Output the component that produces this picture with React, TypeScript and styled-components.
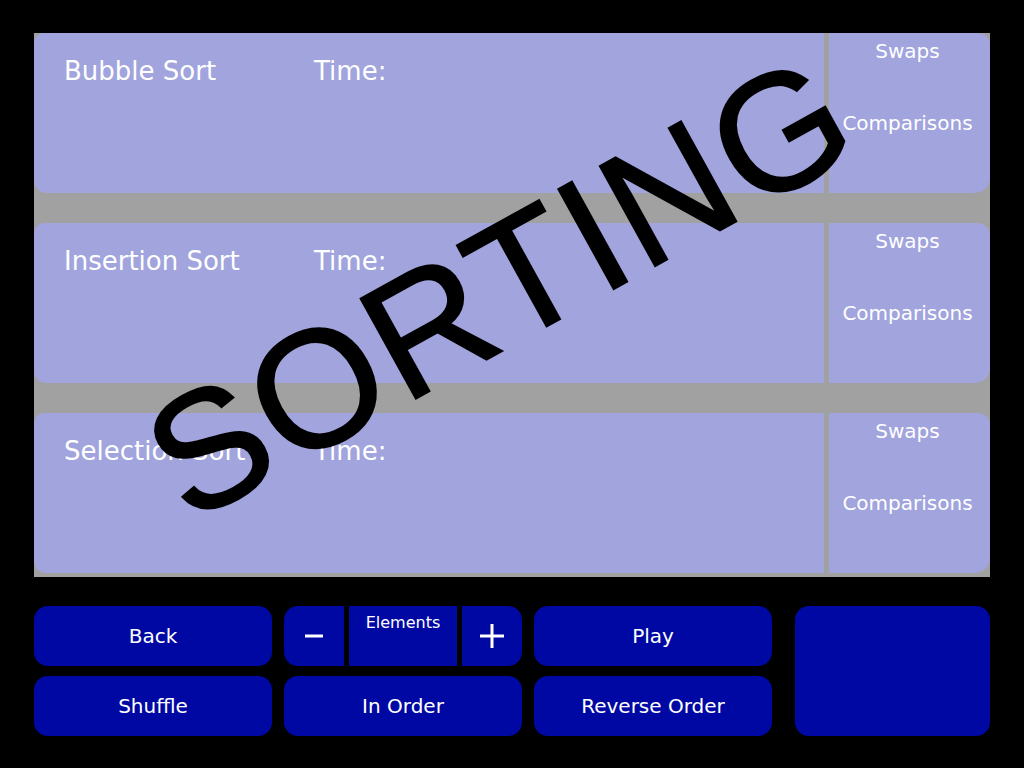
import React from "react";
import styled, { createGlobalStyle } from "styled-components";

const GlobalStyle = createGlobalStyle`
  html, body {
    margin: 0;
    padding: 0;
    background: #000000;
  }
  body {
    font-family: "DejaVu Sans", "Liberation Sans", sans-serif;
  }
`;

const Page = styled.div`
  position: relative;
  width: 1024px;
  height: 768px;
  padding: 33px 34px 0 34px;
  box-sizing: border-box;
  background: #000000;
  overflow: hidden;
`;

const Board = styled.div`
  display: flex;
  flex-direction: column;
  gap: 30px;
  background: #a1a1a1;
  padding-bottom: 4px;
`;

const Row = styled.div`
  display: flex;
  gap: 5px;
  height: 160px;
`;

const MainCard = styled.div`
  flex: 1;
  display: grid;
  grid-template-columns: 250px auto;
  align-content: start;
  padding: 23px 0 0 30px;
  background: #a1a4dd;
  border-radius: 10px 0 0 12px;
  color: #ffffff;
  font-size: 26px;
  line-height: 30px;
`;

const SideCard = styled.div`
  width: 161px;
  display: flex;
  flex-direction: column;
  align-items: center;
  padding-top: 6px;
  box-sizing: border-box;
  background: #a1a4dd;
  border-radius: 0 12px 15px 0;
  color: #ffffff;
  font-size: 20px;
  line-height: 24px;
`;

const Stat = styled.div<{ $gap?: number }>`
  margin-top: ${(p) => p.$gap ?? 0}px;
  margin-right: 4px;
`;

const Controls = styled.div`
  display: grid;
  grid-template-columns: 238px 238px 238px 1fr;
  grid-template-rows: 60px 60px;
  column-gap: 12px;
  row-gap: 10px;
  margin-top: 29px;
`;

const Button = styled.div`
  display: flex;
  align-items: center;
  justify-content: center;
  background: #0008a4;
  border-radius: 14px;
  color: #ffffff;
  font-size: 20px;
  line-height: 24px;
`;

const Display = styled.div`
  grid-column: 4;
  grid-row: 1 / span 2;
  justify-self: end;
  width: 195px;
  background: #0008a4;
  border-radius: 14px;
`;

const Stepper = styled.div`
  display: grid;
  grid-template-columns: 60px 1fr 60px;
  gap: 5px;
`;

const StepButton = styled.div<{ $side: "left" | "right" }>`
  display: flex;
  align-items: center;
  justify-content: center;
  background: #0008a4;
  border-radius: ${(p) => (p.$side === "left" ? "14px 0 0 14px" : "0 14px 14px 0")};
`;

const StepLabel = styled.div`
  background: #0008a4;
  color: #ffffff;
  font-size: 16px;
  line-height: 20px;
  text-align: center;
  padding-top: 7px;
  box-sizing: border-box;
`;

const Stamp = styled.div`
  position: absolute;
  left: 500px;
  top: 287px;
  transform: translate(-50%, -50%) rotate(-29deg);
  font-family: "Liberation Sans", Arial, sans-serif;
  font-size: 166px;
  line-height: 1;
  letter-spacing: 3px;
  color: #000000;
  -webkit-text-stroke: 2px #000000;
  white-space: nowrap;
  pointer-events: none;
`;

const sorts = ["Bubble Sort", "Insertion Sort", "Selection Sort"];

function Minus() {
  return (
    <svg width="18" height="4" viewBox="0 0 18 4">
      <rect x="0" y="0.5" width="18" height="3" fill="#ffffff" />
    </svg>
  );
}

function Plus() {
  return (
    <svg width="24" height="24" viewBox="0 0 24 24">
      <rect x="0" y="10.5" width="24" height="3" fill="#ffffff" />
      <rect x="10.5" y="0" width="3" height="24" fill="#ffffff" />
    </svg>
  );
}

export default function App() {
  return (
    <Page>
      <GlobalStyle />
      <Board>
        {sorts.map((name) => (
          <Row key={name}>
            <MainCard>
              <span>{name}</span>
              <span>Time:</span>
            </MainCard>
            <SideCard>
              <Stat>Swaps</Stat>
              <Stat $gap={48}>Comparisons</Stat>
            </SideCard>
          </Row>
        ))}
      </Board>
      <Controls>
        <Button>Back</Button>
        <Stepper>
          <StepButton $side="left">
            <Minus />
          </StepButton>
          <StepLabel>Elements</StepLabel>
          <StepButton $side="right">
            <Plus />
          </StepButton>
        </Stepper>
        <Button>Play</Button>
        <Display />
        <Button>Shuffle</Button>
        <Button>In Order</Button>
        <Button>Reverse Order</Button>
      </Controls>
      <Stamp>SORTING</Stamp>
    </Page>
  );
}
